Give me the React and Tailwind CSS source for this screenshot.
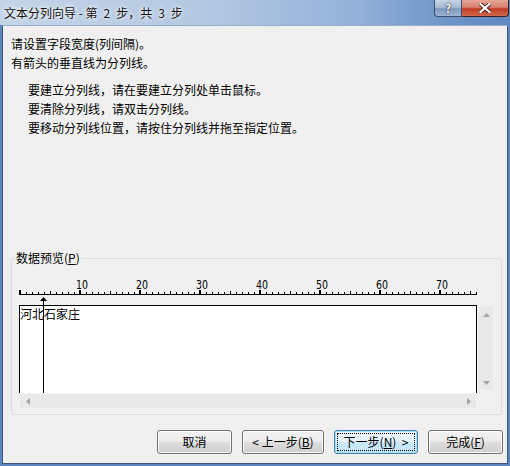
import React from "react";

function Ruler() {
  const ticks = [];
  for (let i = 0; i <= 76; i++) {
    if (i % 10 === 0) ticks.push(<rect key={i} x={6 * i} y={14} width={2} height={4} fill="#000" />);
    else if (i % 5 === 0) ticks.push(<rect key={i} x={6 * i + 1} y={15} width={1} height={3} fill="#000" />);
    else ticks.push(<rect key={i} x={6 * i + 1} y={16} width={1} height={2} fill="#000" />);
  }
  const labels = [10, 20, 30, 40, 50, 60, 70];
  return (
    <svg width="458" height="29" className="block">
      {labels.map((n) => (
        <text key={n} x={6 * n - 3} y={13} fontSize="12" fontFamily="DejaVu Sans, sans-serif" fill="#000" textLength="12" lengthAdjust="spacingAndGlyphs">
          {n}
        </text>
      ))}
      <rect x={0} y={18} width={458} height={1} fill="#000" />
      {ticks}
      <polygon points="21,25 24.5,21 28,25" fill="#000" />
    </svg>
  );
}

function Tri({ dir }) {
  const pts = {
    up: "0,4 3.5,0 7,4",
    down: "0,0 3.5,4 7,0",
    left: "4,0 0,3.5 4,7",
    right: "0,0 4,3.5 0,7",
  }[dir];
  const vert = dir === "up" || dir === "down";
  return (
    <svg width={vert ? 7 : 4} height={vert ? 4 : 7} className="block">
      <polygon points={pts} fill="#a4a4a4" />
    </svg>
  );
}

function Btn({ children, w, def }) {
  if (def) {
    return (
      <button
        className={`${w} h-[24px] rounded-[3px] border border-[#3c7fb1] bg-[linear-gradient(#f2faff_0%,#e3f3fd_50%,#cfeafc_50%,#bde3fb_100%)] shadow-[inset_0_0_0_1px_#a8e0fc] p-[2px] text-[12px] text-black`}
      >
        <span className="flex h-full w-full items-center justify-center border border-dotted border-black leading-none whitespace-pre">
          {children}
        </span>
      </button>
    );
  }
  return (
    <button
      className={`${w} h-[24px] rounded-[3px] border border-[#707070] bg-[linear-gradient(#f2f2f2_0%,#ebebeb_50%,#dddddd_50%,#cfcfcf_100%)] shadow-[inset_0_0_0_1px_#fbfbfb] flex items-center justify-center text-[12px] text-black leading-none whitespace-pre`}
    >
      {children}
    </button>
  );
}

export default function App() {
  return (
    <div className="w-[510px] h-[466px] flex flex-col overflow-hidden bg-[#5b86c0] font-['Noto_Sans_CJK_SC',sans-serif] text-black">
      {/* Title bar */}
      <div className="h-[25px] flex items-start bg-[linear-gradient(to_right,#c4d4e8_0%,#b3c8e2_40%,#93b1d9_70%,#6d95c9_88%,#5f89c2_100%)]">
        <div className="pl-[4px] pt-[4px] text-[12px] leading-[17px] text-[#111] whitespace-pre [text-shadow:0_0_6px_#ffffff,0_0_3px_#ffffff]">
          {"文本分列向导 - 第\u20022\u2002步，共\u20023\u2002步"}
        </div>
        <div className="ml-auto mr-[1px] flex">
          <div className="w-[28px] h-[17px] rounded-bl-[4px] border border-t-0 border-[#3b4f6d] bg-[linear-gradient(#c7d5e8_0%,#a9bcd6_45%,#7f99be_55%,#9fb5d4_100%)] flex items-center justify-center">
            <span className="text-[12px] font-bold leading-none text-white [text-shadow:0_0_2px_#223,0_0_1px_#223]">?</span>
          </div>
          <div className="w-[47px] h-[17px] rounded-br-[4px] border border-l-0 border-t-0 border-[#3b2020] bg-[linear-gradient(#e8a597_0%,#d7806f_45%,#c03c24_55%,#d2694f_100%)] flex items-center justify-center">
            <svg width="12" height="10" viewBox="0 0 12 10" className="block">
              <path d="M1.5 1 L10.5 9 M10.5 1 L1.5 9" stroke="#3a1a14" strokeWidth="4" strokeLinecap="square" />
              <path d="M1.5 1 L10.5 9 M10.5 1 L1.5 9" stroke="#ffffff" strokeWidth="2.2" strokeLinecap="square" />
            </svg>
          </div>
        </div>
      </div>

      {/* Client area */}
      <div className="flex-1 flex flex-col mx-[2px] mb-[2px] border border-[#3d5578] border-t-[#9aadc6] bg-[#f0f0f0]">
        <div className="pl-[8px] pt-[8px] text-[12px] leading-[19px]">
          <p>请设置字段宽度(列间隔)。</p>
          <p>有箭头的垂直线为分列线。</p>
          <div className="mt-[8px] pl-[17px]">
            <p>要建立分列线，请在要建立分列处单击鼠标。</p>
            <p>要清除分列线，请双击分列线。</p>
            <p>要移动分列线位置，请按住分列线并拖至指定位置。</p>
          </div>
        </div>

        <fieldset className="mt-[114px] ml-[8px] mr-[5px] rounded-[3px] border border-[#d5dfe5]">
          <legend className="ml-[3px] px-[1px] text-[12px] leading-[14px]">
            数据预览(<span className="underline underline-offset-[1px]">P</span>)
          </legend>
          <div className="px-[7px] pt-[11px] pb-[5px]">
            <div className="relative">
              <Ruler />
              <div className="flex items-start">
                <div className="w-[458px] h-[88px] border-t border-x border-black bg-white text-[12px] leading-[15px]">
                  河北石家庄
                </div>
                <div className="ml-[1px] w-[16px] h-[86px] bg-[#e9e9e9] border border-[#f2f2f2] flex flex-col items-center justify-between pt-[7px] pb-[5px]">
                  <Tri dir="up" />
                  <Tri dir="down" />
                </div>
              </div>
              <div className="w-[458px] h-[16px] bg-[#e9e9e9] border border-[#f2f2f2] flex items-center justify-between pl-[6px] pr-[5px]">
                <Tri dir="left" />
                <Tri dir="right" />
              </div>
              <div className="absolute left-[24px] top-[24px] w-px h-[93px] bg-black" />
            </div>
          </div>
        </fieldset>

        <div className="mt-[15px] flex justify-end gap-[10px] pr-[4px]">
          <Btn w="w-[75px]">取消</Btn>
          <Btn w="w-[82px]">
            {"< 上一步("}<span className="underline underline-offset-[1px]">B</span>)
          </Btn>
          <Btn w="w-[84px]" def>
            下一步(<span className="underline underline-offset-[1px]">N</span>{")  >"}
          </Btn>
          <Btn w="w-[75px]">
            完成(<span className="underline underline-offset-[1px]">F</span>)
          </Btn>
        </div>
      </div>
    </div>
  );
}
